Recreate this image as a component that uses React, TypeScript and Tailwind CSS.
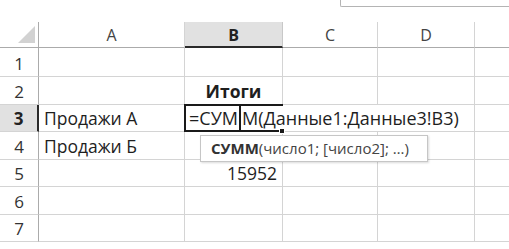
import React from "react";

const GRID = "border-[#d4d4d4]";

function RowHead({ n, h, active }: { n: number; h: string; active?: boolean }) {
  return (
    <div
      className={`w-[39px] shrink-0 flex items-end justify-center pb-[4px] border-b border-b-[#d4d4d4] text-[17px] ${h} ${
        active
          ? "bg-[#e1e1e1] border-r-2 border-r-[#2a2a2a] font-bold text-[#222]"
          : "border-r border-r-[#ababab] text-[#333]"
      }`}
    >
      {n}
    </div>
  );
}

function Cell({ w, children, className = "" }: { w: string; children?: React.ReactNode; className?: string }) {
  return <div className={`${w} shrink-0 border-r border-b ${GRID} flex items-end pb-[4px] ${className}`}>{children}</div>;
}

export default function App() {
  const heights = ["h-[29px]", "h-[28px]", "h-[27px]", "h-[28px]", "h-[27px]", "h-[28px]", "h-[27px]"];
  return (
    <div className="w-[509px] h-[249px] bg-white overflow-hidden relative font-['Open_Sans',Arial,sans-serif] text-[#1e1e1e] text-[17.5px] leading-none">
      {/* formula bar edge */}
      <div className="h-[22px] flex">
        <div className="w-[340px] shrink-0" />
        <div className="flex-1 h-[7px] border-l border-b border-[#b4b4b4] rounded-bl-[2px]" />
      </div>

      {/* column headers */}
      <div className="flex h-[26px] text-[16px] text-[#444]">
        <div className="w-[39px] shrink-0 border-r border-r-[#ababab] border-b border-b-[#ababab] relative">
          <svg width="39" height="26" className="absolute left-0 top-0">
            <polygon points="18,21 35,4 35,21" fill="#d2d2d2" />
          </svg>
        </div>
        <div className="w-[146px] shrink-0 border-r border-r-[#d4d4d4] border-b border-b-[#ababab] flex items-center justify-center pt-[1px]">A</div>
        <div className="w-[98px] shrink-0 bg-[#e1e1e1] border-r border-r-[#c8c8c8] border-b-2 border-b-[#2a2a2a] flex items-center justify-center pt-[2px] font-bold text-[#222]">
          B
        </div>
        <div className="w-[95px] shrink-0 border-r border-r-[#d4d4d4] border-b border-b-[#ababab] flex items-center justify-center pt-[1px]">C</div>
        <div className="w-[97px] shrink-0 border-r border-r-[#d4d4d4] border-b border-b-[#ababab] flex items-center justify-center pt-[1px]">D</div>
        <div className="flex-1 border-b border-b-[#ababab]" />
      </div>

      {/* rows */}
      {heights.map((h, i) => {
        const r = i + 1;
        if (r === 3) {
          return (
            <div key={r} className={`flex ${h}`}>
              <RowHead n={r} h={h} active />
              <Cell w="w-[146px]" className="pl-[5px]">Продажи А</Cell>
              <div className={`w-[290px] shrink-0 border-r border-b ${GRID} relative flex items-stretch`}>
                <div className="flex items-stretch pl-[4px] text-[18px]">
                  <span className="self-end pb-[4px]">=СУМ</span>
                  <span className="w-[2px] bg-[#1a1a1a] mx-[1px]" />
                  <span className="self-end pb-[4px]">М(Данные1:Данные3!B3)</span>
                </div>
                {/* active cell border */}
                <div className="absolute left-[-1px] top-[-1px] w-[99px] h-[28px] border-l-2 border-t-2 border-b-2 border-[#1a1a1a] pointer-events-none" />
                {/* fill handle */}
                <div className="absolute left-[94px] top-[23px] w-[6px] h-[6px] bg-[#1a1a1a] border border-white" />
              </div>
              <div className={`flex-1 border-b ${GRID}`} />
            </div>
          );
        }
        return (
          <div key={r} className={`flex ${h}`}>
            <RowHead n={r} h={h} />
            <Cell w="w-[146px]" className="pl-[5px]">{r === 4 ? "Продажи Б" : null}</Cell>
            <Cell w="w-[98px]" className={r === 2 ? "justify-center font-bold" : r === 5 ? "justify-end pr-[5px]" : ""}>
              {r === 2 ? "Итоги" : r === 5 ? "15952" : null}
            </Cell>
            <Cell w="w-[95px]" />
            <Cell w="w-[97px]" />
            <div className={`flex-1 border-b ${GRID}`} />
          </div>
        );
      })}

      {/* function tooltip */}
      <div className="absolute left-[200px] top-[135px] w-[228px] h-[27px] bg-white border border-[#c6c6c6] shadow-[1px_1px_2px_rgba(0,0,0,0.15)] flex items-center pl-[10px] text-[15px] text-[#444]">
        <span className="font-bold text-[#333]">СУММ</span>
        <span>(число1; [число2]; …)</span>
      </div>
    </div>
  );
}
